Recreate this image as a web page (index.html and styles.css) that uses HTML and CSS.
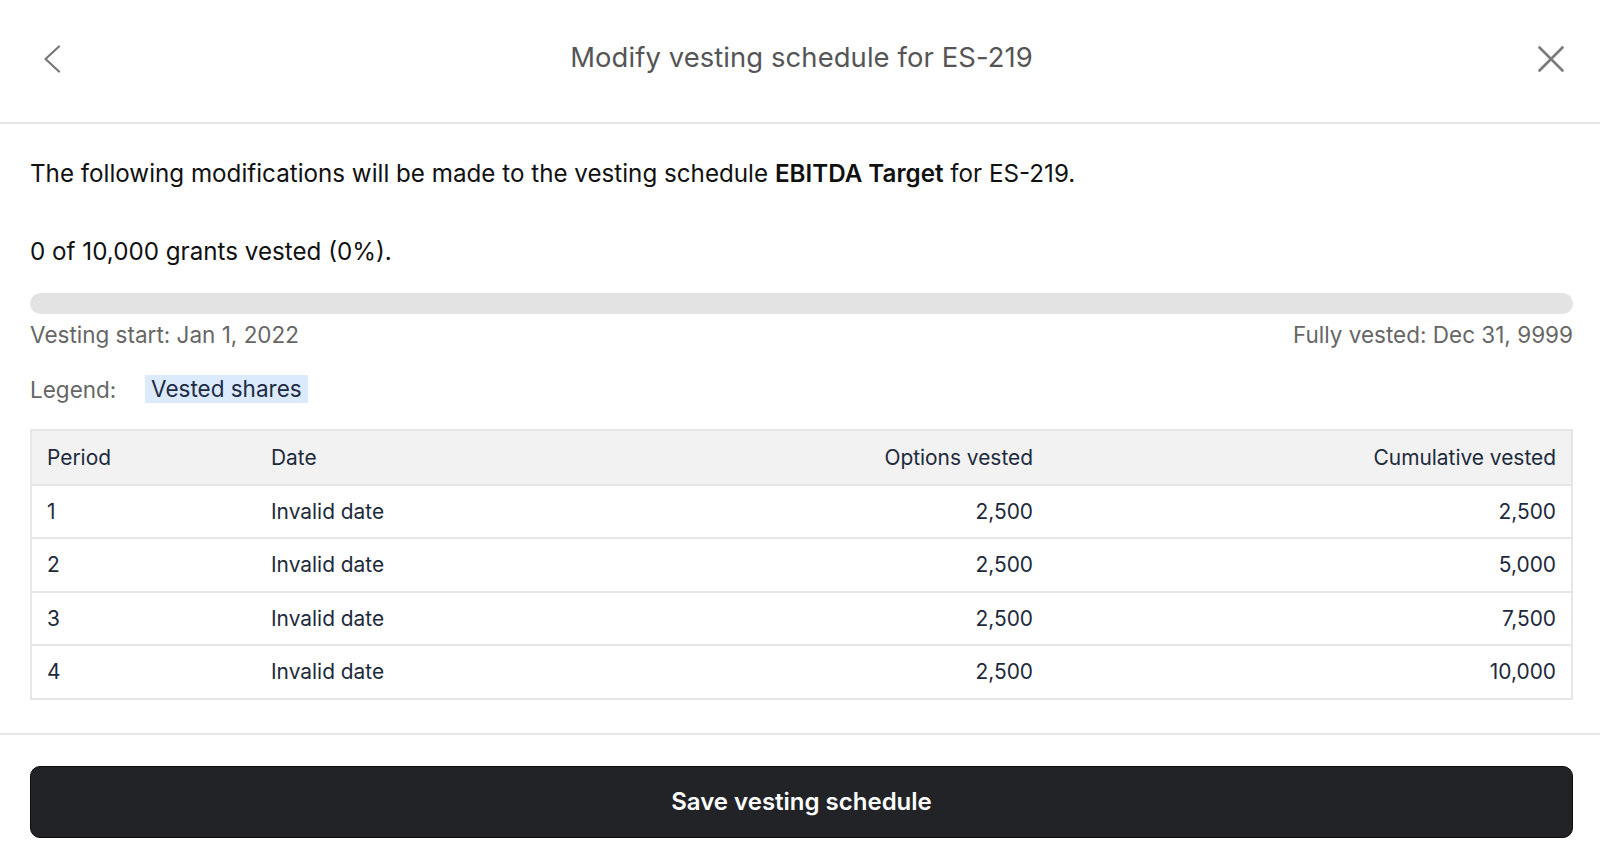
FILE: index.html
```html
<!DOCTYPE html>
<html>
<head>
<meta charset="utf-8">
<link rel="stylesheet" href="styles.css">
</head>
<body>
<div class="modal">
  <header class="header">
    <button class="icon-btn back" aria-label="Back">
      <svg width="18" height="28" viewBox="0 0 18 28"><path d="M16 1.5 L2.5 14 L16 26.5" fill="none" stroke="#777" stroke-width="2.2" stroke-linecap="round" stroke-linejoin="round"/></svg>
    </button>
    <h1 class="title">Modify vesting schedule for ES-219</h1>
    <button class="icon-btn close" aria-label="Close">
      <svg width="26" height="26" viewBox="0 0 26 26"><path d="M1.5 1.5 L24.5 24.5 M24.5 1.5 L1.5 24.5" fill="none" stroke="#7a7a7a" stroke-width="2.6" stroke-linecap="round"/></svg>
    </button>
  </header>
  <main class="content">
    <p class="intro">The following modifications will be made to the vesting schedule <strong>EBITDA Target</strong> for ES-219.</p>
    <p class="summary">0 of 10,000 grants vested (0%).</p>
    <div class="progress"><div class="progress-fill" style="width:0%"></div></div>
    <div class="dates">
      <span>Vesting start: Jan 1, 2022</span>
      <span>Fully vested: Dec 31, 9999</span>
    </div>
    <div class="legend">
      <span class="legend-label">Legend:</span>
      <span class="chip">Vested shares</span>
    </div>
    <table class="schedule">
      <colgroup>
        <col class="c1"><col class="c2"><col class="c3"><col class="c4">
      </colgroup>
      <thead>
        <tr><th>Period</th><th>Date</th><th class="num">Options vested</th><th class="num">Cumulative vested</th></tr>
      </thead>
      <tbody>
        <tr><td>1</td><td>Invalid date</td><td class="num">2,500</td><td class="num">2,500</td></tr>
        <tr><td>2</td><td>Invalid date</td><td class="num">2,500</td><td class="num">5,000</td></tr>
        <tr><td>3</td><td>Invalid date</td><td class="num">2,500</td><td class="num">7,500</td></tr>
        <tr><td>4</td><td>Invalid date</td><td class="num">2,500</td><td class="num">10,000</td></tr>
      </tbody>
    </table>
  </main>
  <footer class="footer">
    <button class="save">Save vesting schedule</button>
  </footer>
</div>
</body>
</html>
```
FILE: styles.css
```css
* { box-sizing: border-box; }
html, body { margin: 0; padding: 0; background: #fff; }
body { font-family: Inter, "Noto Sans", sans-serif; color: #111; }

.modal { width: 1600px; min-height: 867px; display: flex; flex-direction: column; }

.header {
  height: 124px;
  border-bottom: 2px solid #e6e6e6;
  display: flex;
  align-items: center;
  justify-content: space-between;
  padding: 0 36px 9px 43px;
}
.icon-btn { background: none; border: 0; padding: 0; display: flex; cursor: pointer; }
.back { margin-top: 4px; }
.close { margin-top: 4px; }
.title {
  margin: 0 0 0 4px;
  font-size: 27.4px;
  font-weight: 400;
  color: #555;
  letter-spacing: 0.1px;
}

.content { padding: 0 27px 33px 30px; border-bottom: 2px solid #e6e6e6; }
.intro { margin: 33.5px 0 0; font-size: 24.2px; line-height: 32px; color: #111; }
.intro strong { font-weight: 600; }
.summary { margin: 46.5px 0 0; font-size: 24.2px; line-height: 32px; color: #111; }

.progress { margin-top: 25px; height: 20.5px; border-radius: 11px; background: #e3e3e3; overflow: hidden; }
.progress-fill { height: 100%; background: #dbeafc; }

.dates {
  display: flex; justify-content: space-between;
  margin-top: 6.5px; font-size: 22.5px; line-height: 30px; color: #666;
}
.legend { display: flex; align-items: center; margin-top: 25px; font-size: 22.5px; color: #666; }
.legend-label { width: 115px; }
.chip { background: #dbeafc; color: #1d2b45; padding: 0 6px; line-height: 28px; }

.schedule {
  width: 100%;
  margin-top: 25.5px;
  border-collapse: collapse;
  border: 2px solid #e6e6e6;
  table-layout: fixed;
  font-size: 20.9px;
  color: #1d2a3c;
}
.c1 { width: 225px; }
.c2 { width: 420px; }
.c3 { width: 372px; }
.schedule th, .schedule td {
  text-align: left;
  font-weight: 400;
  padding: 0 15px;
  height: 53.5px;
  border-bottom: 2px solid #e6e6e6;
}
.schedule thead th { background: #f2f2f2; height: 55px; }
.schedule tbody tr:last-child td { border-bottom: 0; }
.schedule .num { text-align: right; }

.footer { padding: 31.5px 27px 0 30px; }
.save {
  width: 100%;
  height: 71.5px;
  background: #222327;
  border: 1px solid #0d0d0d;
  border-radius: 10px;
  color: #fff;
  font-family: Inter, "Noto Sans", sans-serif;
  font-size: 24px;
  font-weight: 600;
  cursor: pointer;
}
```
